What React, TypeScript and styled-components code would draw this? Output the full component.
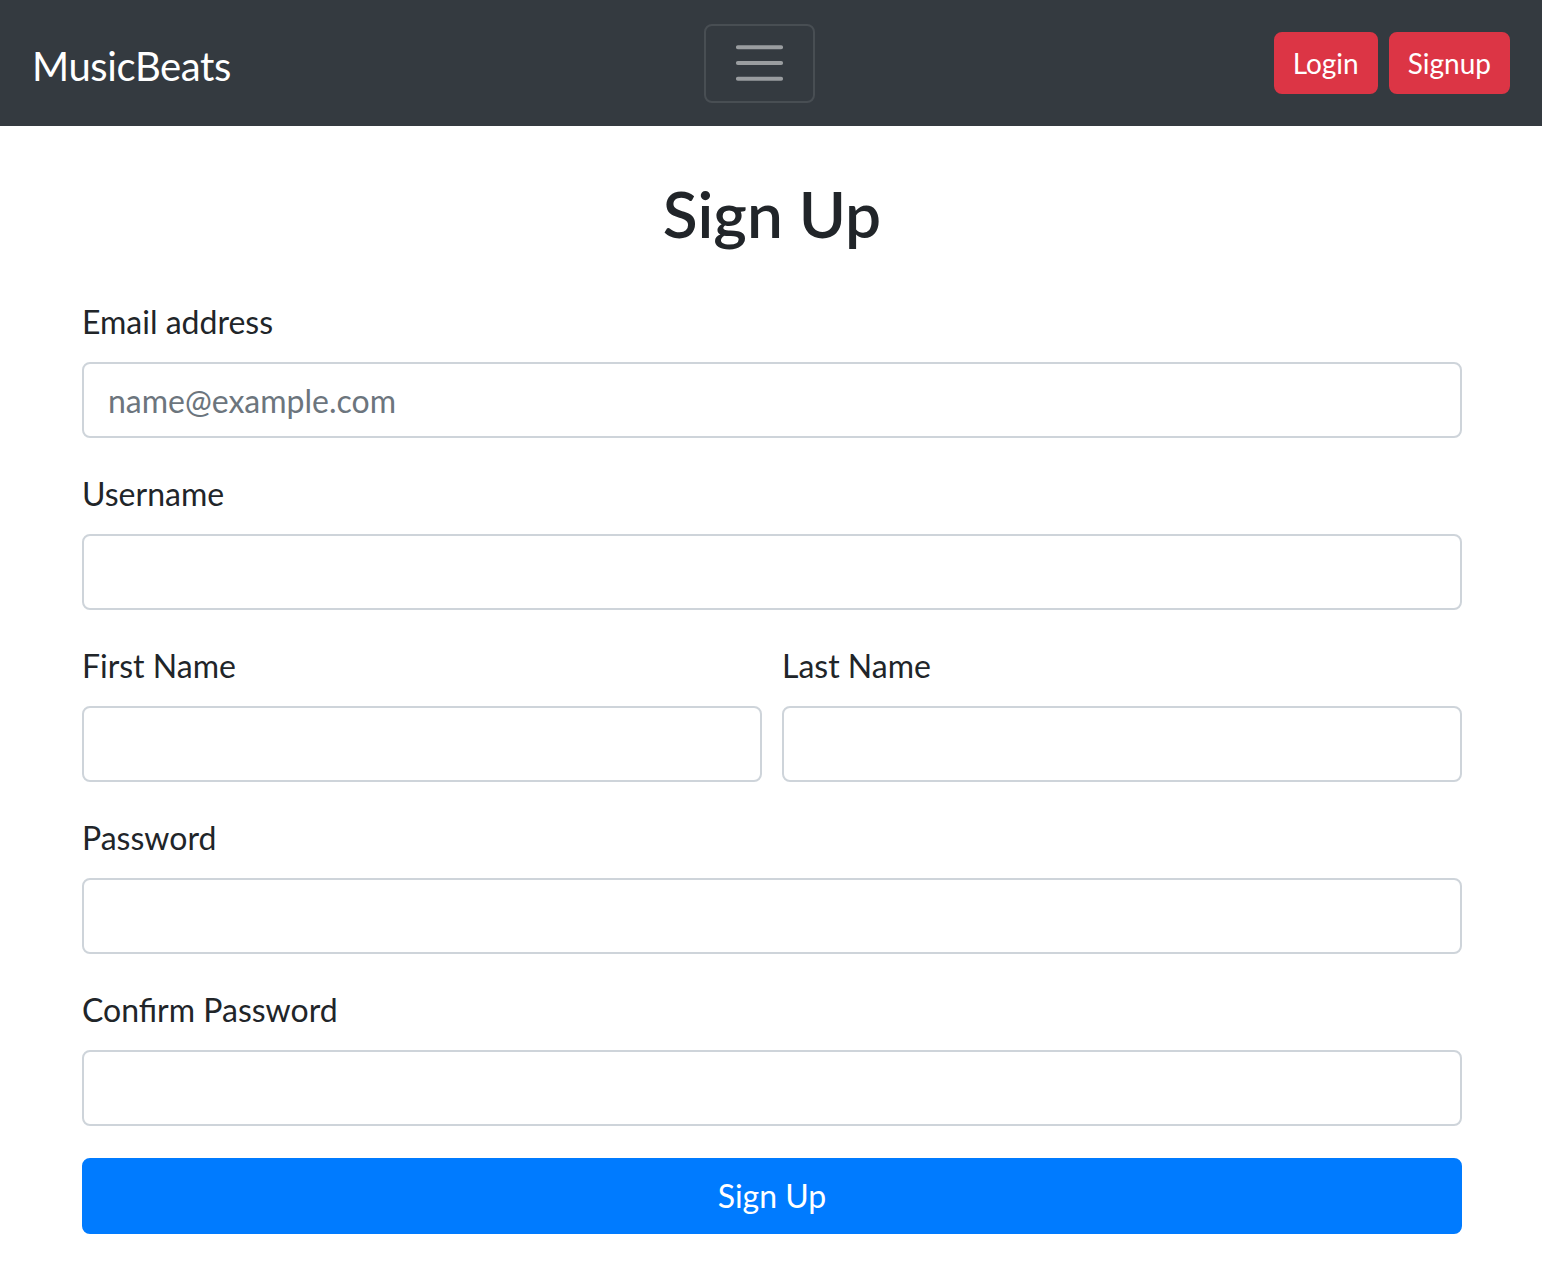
import React from "react";
import styled, { createGlobalStyle } from "styled-components";

const Global = createGlobalStyle`
  * { box-sizing: border-box; }
  html, body { margin: 0; padding: 0; background: #fff; }
  body {
    font-family: "Segoe UI", Lato, "Open Sans", sans-serif;
    color: #212529;
    font-size: 32px;
    line-height: 1.5;
  }
`;

const Navbar = styled.nav`
  height: 126px;
  background: #343a40;
  padding: 0 32px;
  display: flex;
  align-items: center;
  justify-content: space-between;
`;

const Brand = styled.a`
  color: #fff;
  font-size: 40px;
  line-height: 60px;
  letter-spacing: -0.4px;
  text-decoration: none;
  margin-right: 14px;
  padding-top: 6px;
`;

const Toggler = styled.button`
  width: 111px;
  height: 79px;
  padding: 8px 24px;
  background: transparent;
  border: 2px solid rgba(255, 255, 255, 0.1);
  border-radius: 8px;
  display: flex;
  align-items: center;
  justify-content: center;
  cursor: pointer;
`;

const NavActions = styled.div`
  display: flex;
  align-items: center;
  gap: 11px;
`;

const DangerButton = styled.button`
  background: #dc3545;
  color: #fff;
  border: 2px solid #dc3545;
  border-radius: 8px;
  font-family: inherit;
  font-size: 28px;
  line-height: 42px;
  padding: 8px 17px;
  height: 62px;
  cursor: pointer;
`;

const Container = styled.main`
  width: 1440px;
  margin: 0 auto;
  padding: 0 29px 0 31px;
`;

const Title = styled.h2`
  margin: 49px 0 46px;
  font-size: 64px;
  font-weight: 600;
  line-height: 77px;
  text-align: center;
  color: #212529;
`;

const Group = styled.div`
  margin-bottom: 32px;
`;

const Row = styled.div`
  display: grid;
  grid-template-columns: 1fr 1fr;
  column-gap: 20px;
`;

const Label = styled.label`
  display: block;
  font-size: 32px;
  line-height: 48px;
  margin-bottom: 16px;
  color: #212529;
`;

const Input = styled.input`
  display: block;
  width: 100%;
  height: 76px;
  padding: 12px 24px;
  font-family: inherit;
  font-size: 32px;
  line-height: 48px;
  color: #495057;
  background: #fff;
  border: 2px solid #ced4da;
  border-radius: 8px;
  outline: none;
  &::placeholder { color: #6c757d; opacity: 1; }
`;

const SubmitButton = styled.button`
  display: block;
  width: 100%;
  height: 76px;
  background: #007bff;
  color: #fff;
  border: 2px solid #007bff;
  border-radius: 8px;
  font-family: inherit;
  font-size: 32px;
  line-height: 48px;
  cursor: pointer;
`;

const HamburgerIcon = () => (
  <svg width="60" height="60" viewBox="0 0 30 30" aria-hidden="true">
    <path
      d="M4 7h22M4 15h22M4 23h22"
      stroke="rgba(255,255,255,0.5)"
      strokeWidth="2"
      strokeLinecap="round"
      strokeMiterlimit="10"
    />
  </svg>
);

export default function App() {
  return (
    <>
      <Global />
      <Navbar>
        <Brand href="#">MusicBeats</Brand>
        <Toggler aria-label="Toggle navigation">
          <HamburgerIcon />
        </Toggler>
        <NavActions>
          <DangerButton>Login</DangerButton>
          <DangerButton>Signup</DangerButton>
        </NavActions>
      </Navbar>
      <Container>
        <Title>Sign Up</Title>
        <form onSubmit={(e) => e.preventDefault()}>
          <Group>
            <Label>Email address</Label>
            <Input type="email" placeholder="name@example.com" />
          </Group>
          <Group>
            <Label>Username</Label>
            <Input type="text" />
          </Group>
          <Row>
            <Group>
              <Label>First Name</Label>
              <Input type="text" />
            </Group>
            <Group>
              <Label>Last Name</Label>
              <Input type="text" />
            </Group>
          </Row>
          <Group>
            <Label>Password</Label>
            <Input type="password" />
          </Group>
          <Group>
            <Label>Confirm Password</Label>
            <Input type="password" />
          </Group>
          <SubmitButton type="submit">Sign Up</SubmitButton>
        </form>
      </Container>
    </>
  );
}
